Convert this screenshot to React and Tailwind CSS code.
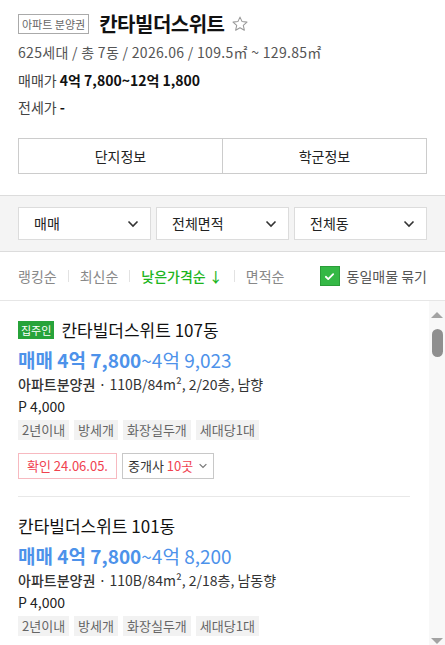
import React from "react";

// Listing detail panel: complex header, filters, sort bar and article list

const Chevron = ({ className = "" }) => (
  <svg viewBox="0 0 12 8" className={className} fill="none" stroke="currentColor" strokeWidth="1.6">
    <path d="M1.5 1.5 6 6l4.5-4.5" />
  </svg>
);

const Select = ({ label }) => (
  <div className="flex-1 h-[33px] bg-white border border-[#dcdcdc] flex items-center justify-between pl-[15px] pr-[11px] text-[14px] text-[#222]">
    <span>{label}</span>
    <Chevron className="w-[12px] h-[8px] text-[#333]" />
  </div>
);

const Sep = () => <span className="w-px h-[12px] bg-[#e2e2e2] mx-[11px]" />;

const Tag = ({ children }) => (
  <span className="h-[20px] px-[4px] bg-[#f2f2f2] text-[#666] text-[13px] leading-[20px]">{children}</span>
);

const listings = [
  {
    owner: true,
    name: "칸타빌더스위트 107동",
    low: "4억 7,800",
    high: "~4억 9,023",
    spec: "110B/84m², 2/20층, 남향",
    confirm: true,
  },
  {
    owner: false,
    name: "칸타빌더스위트 101동",
    low: "4억 7,800",
    high: "~4억 8,200",
    spec: "110B/84m², 2/18층, 남동향",
    confirm: false,
  },
];

const Listing = ({ item, last }) => (
  <div className={`pt-[19px] pb-[17px] ${last ? "" : "border-b border-[#e8e8e8]"}`}>
    <div className="flex items-center h-[20px]">
      {item.owner && (
        <span className="h-[18px] px-[3px] bg-[#27a33a] text-white text-[11px] leading-[18px] mr-[7px]">집주인</span>
      )}
      <span className="text-[17px] text-[#111]">{item.name}</span>
    </div>
    <div className="mt-[8px] text-[19px] leading-[24px] text-[#4d92ea]">
      <span className="font-bold">매매 {item.low}</span>
      <span>{item.high}</span>
    </div>
    <div className="mt-[1px] text-[14px] leading-[22px] text-[#333]">
      <span className="font-medium">아파트분양권</span> · {item.spec}
    </div>
    <div className="text-[14px] leading-[22px] text-[#222]">P 4,000</div>
    <div className="mt-[3px] flex gap-[5px]">
      <Tag>2년이내</Tag>
      <Tag>방세개</Tag>
      <Tag>화장실두개</Tag>
      <Tag>세대당1대</Tag>
    </div>
    {item.confirm && (
      <div className="mt-[13px] flex gap-[5px] h-[26px]">
        <span className="px-[8px] border border-[#f7b9c0] text-[#f0424f] text-[13px] leading-[24px]">확인 24.06.05.</span>
        <span className="flex items-center px-[5px] border border-[#c8c8c8] text-[13px] text-[#333]">
          중개사&nbsp;<span className="text-[#f0424f]">10곳</span>
          <Chevron className="w-[10px] h-[6px] ml-[5px] text-[#777]" />
        </span>
      </div>
    )}
  </div>
);

export default function App() {
  return (
    <div
      className="w-[445px] h-[645px] bg-white flex flex-col overflow-hidden"
      style={{ fontFamily: '"Noto Sans CJK KR", "Noto Sans", sans-serif' }}
    >
      {/* complex header */}
      <div className="px-[18px] pt-[14px]">
        <div className="flex items-center h-[20px]">
          <span className="h-[20px] px-[3px] border border-[#aaa] text-[11px] leading-[18px] text-[#666]">아파트 분양권</span>
          <span className="ml-[10px] text-[20px] font-bold text-[#111] tracking-[-0.5px]">칸타빌더스위트</span>
          <svg viewBox="0 0 24 24" className="w-[18px] h-[18px] ml-[6px]" fill="none" stroke="#999" strokeWidth="1.4" strokeLinejoin="round">
            <path d="M12 2.8l2.8 6 6.5.7-4.9 4.4 1.4 6.4L12 17l-5.8 3.3 1.4-6.4-4.9-4.4 6.5-.7z" />
          </svg>
        </div>
        <div className="mt-[7px] text-[14px] leading-[22px] text-[#555] tracking-[0.3px]">625세대 / 총 7동 / 2026.06 / 109.5㎡ ~ 129.85㎡</div>
        <div className="mt-[6px] text-[14px] leading-[22px] text-[#444]">
          매매가 <span className="font-bold text-[#111]">4억 7,800~12억 1,800</span>
        </div>
        <div className="mt-[5px] text-[14px] leading-[22px] text-[#444]">
          전세가 <span className="font-bold text-[#111]">-</span>
        </div>
        <div className="mt-[20px] flex h-[36px] border border-[#ccc] text-[14px] text-[#222]">
          <div className="flex-1 flex items-center justify-center border-r border-[#ccc]">단지정보</div>
          <div className="flex-1 flex items-center justify-center">학군정보</div>
        </div>
      </div>

      {/* filters */}
      <div className="mt-[21px] bg-[#f4f4f4] border-y border-[#dcdcdc] px-[18px] pt-[11px] pb-[11px] flex gap-[5px]">
        <Select label="매매" />
        <Select label="전체면적" />
        <Select label="전체동" />
      </div>

      {/* sort */}
      <div className="h-[49px] px-[18px] flex items-center border-b border-[#e6e6e6] text-[14px]">
        <span className="text-[#888]">랭킹순</span>
        <Sep />
        <span className="text-[#888]">최신순</span>
        <Sep />
        <span className="text-[#1db51d] font-medium">낮은가격순 ↓</span>
        <Sep />
        <span className="text-[#888]">면적순</span>
        <div className="ml-auto flex items-center">
          <span className="w-[20px] h-[20px] bg-[#34b845] border border-[#2a9d38] flex items-center justify-center">
            <svg viewBox="0 0 12 12" className="w-[11px] h-[11px]" fill="none" stroke="white" strokeWidth="2" strokeLinecap="round" strokeLinejoin="round">
              <path d="M2 6.3l2.6 2.5L10 3.4" />
            </svg>
          </span>
          <span className="ml-[7px] text-[#555]">동일매물 묶기</span>
        </div>
      </div>

      {/* list */}
      <div className="flex-1 flex min-h-0">
        <div className="flex-1 overflow-hidden pl-[18px] pr-[19px]">
          {listings.map((item, i) => (
            <Listing key={i} item={item} last={i === listings.length - 1} />
          ))}
        </div>
        <div className="w-[16px] bg-[#f8f8f8] flex flex-col items-center pt-[11px]">
          <span className="w-0 h-0 border-x-[6px] border-x-transparent border-b-[6px] border-b-[#a3a3a3]" />
          <span className="mt-[11px] w-[11px] h-[28px] rounded-full bg-[#8f8f8f]" />
          <span className="mt-auto mb-[1px] w-0 h-0 border-x-[6px] border-x-transparent border-t-[6px] border-t-[#a3a3a3]" />
        </div>
      </div>
    </div>
  );
}
